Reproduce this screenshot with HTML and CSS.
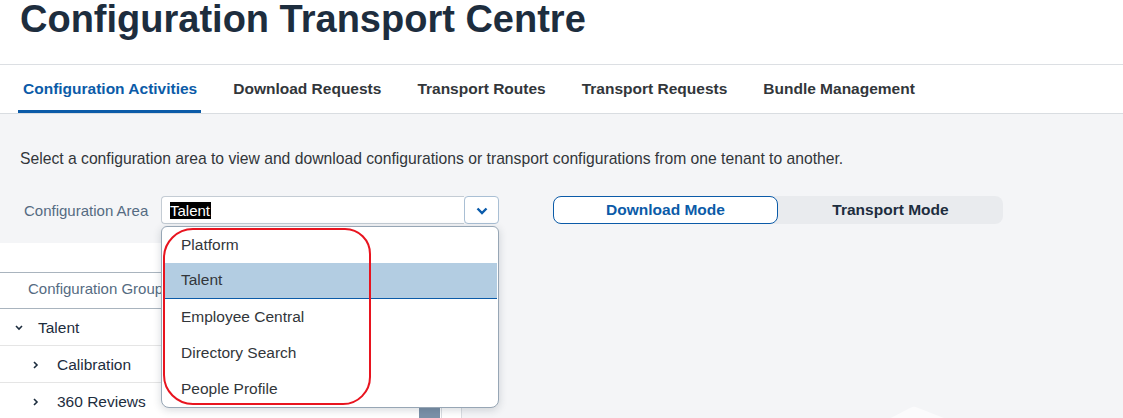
FILE: index.html
```html
<!DOCTYPE html>
<html lang="en">
<head>
    <meta charset="UTF-8">
    <meta name="viewport" content="width=device-width, initial-scale=1.0">
    <title>Configuration Transport Centre</title>
    <link rel="stylesheet" href="styles.css">
</head>
<body>
    <header class="page-header">
        <h1>Configuration Transport Centre</h1>
    </header>
    <nav class="tabs">
        <a class="tab active" href="#">Configuration Activities</a>
        <a class="tab" href="#">Download Requests</a>
        <a class="tab" href="#">Transport Routes</a>
        <a class="tab" href="#">Transport Requests</a>
        <a class="tab" href="#">Bundle Management</a>
    </nav>
    <main class="content">
        <p class="intro">Select a configuration area to view and download configurations or transport configurations from one tenant to another.</p>
        <div class="area-row">
            <label class="area-label">Configuration Area</label>
            <div class="combo">
                <div class="combo-input"><span class="picked">Talent</span></div>
                <button class="combo-btn">
                    <svg width="12" height="8" viewBox="0 0 12 8"><path d="M1.5 1.5 L6 6 L10.5 1.5" fill="none" stroke="#0a5bab" stroke-width="2.4"/></svg>
                </button>
                <!-- open list of areas -->
                <ul class="combo-list">
                    <li>Platform</li>
                    <li class="current">Talent</li>
                    <li>Employee Central</li>
                    <li>Directory Search</li>
                    <li>People Profile</li>
                </ul>
                <div class="annotation"></div>
            </div>
            <div class="mode-switch">
                <button class="mode on">Download Mode</button>
                <button class="mode">Transport Mode</button>
            </div>
        </div>
        <div class="lower">
            <div class="tree-panel">
                <div class="tree-top"></div>
                <div class="tree-table">
                    <div class="tree-rows">
                        <div class="tree-head">Configuration Group</div>
                        <div class="tree-row">
                            <svg class="arrow" width="10" height="8" viewBox="0 0 10 8"><path d="M2 2 L5 5 L8 2" fill="none" stroke="#1d2d3e" stroke-width="1.6"/></svg>
                            <span>Talent</span>
                        </div>
                        <div class="tree-row sub">
                            <svg class="arrow" width="8" height="10" viewBox="0 0 8 10"><path d="M2 2 L5 5 L2 8" fill="none" stroke="#1d2d3e" stroke-width="1.6"/></svg>
                            <span>Calibration</span>
                        </div>
                        <div class="tree-row sub">
                            <svg class="arrow" width="8" height="10" viewBox="0 0 8 10"><path d="M2 2 L5 5 L2 8" fill="none" stroke="#1d2d3e" stroke-width="1.6"/></svg>
                            <span>360 Reviews</span>
                        </div>
                    </div>
                    <div class="scroll-col"><div class="thumb"></div></div>
                    <div class="extra-col"></div>
                </div>
            </div>
            <div class="illustration">
                <svg width="64" height="14" viewBox="0 0 64 14"><path d="M0 14 L24 1.5 Q27 0 30 1.5 L62 14 Z" fill="#fbfbfc"/></svg>
            </div>
        </div>
    </main>
</body>
</html>
```

FILE: styles.css
```css
html, body {
    height: 100%;
}
body {
    margin: 0;
    overflow: hidden;
    font-family: "Liberation Sans", Arial, sans-serif;
    background-color: #f4f5f7;
    color: #1d2d3e;
}
.page-header {
    background-color: #fff;
    height: 64px;
    padding-left: 20px;
    border-bottom: 1px solid #dcdfe3;
}
.page-header h1 {
    margin: 0;
    font-size: 38px;
    line-height: 38px;
    font-weight: bold;
    color: #1d2d3e;
}
.tabs {
    background-color: #fff;
    height: 48px;
    border-bottom: 1px solid #d9dde1;
    display: flex;
    align-items: stretch;
    padding-left: 18px;
    gap: 27px;
}
.tab {
    display: flex;
    align-items: center;
    padding: 3px 4px 0 5px;
    font-size: 15.5px;
    font-weight: bold;
    color: #32363a;
    text-decoration: none;
    border-bottom: 3px solid transparent;
}
.tab.active {
    color: #0b5ba8;
    border-bottom-color: #0b5ba8;
}
.content {
    padding: 35px 20px 0;
}
.intro {
    margin: 0;
    font-size: 15.7px;
    line-height: 20px;
    color: #32363a;
}
.area-row {
    display: flex;
    align-items: center;
    margin-top: 27px;
    height: 28px;
}
.area-label {
    width: 137px;
    padding-left: 4px;
    font-size: 15px;
    color: #556b82;
}
.combo {
    position: relative;
    width: 338px;
    height: 28px;
    display: flex;
}
.combo-input {
    flex: 1;
    background-color: #fff;
    border: 1px solid #c4ccd4;
    border-right: none;
    border-radius: 4px 0 0 4px;
    display: flex;
    align-items: center;
    padding-left: 8px;
}
.picked {
    background-color: #000;
    color: #fff;
    font-size: 15px;
    line-height: 17px;
    padding-right: 1px;
}
.combo-btn {
    width: 35px;
    height: 28px;
    background-color: #fff;
    border: 1px solid #a9bfd4;
    border-radius: 4px;
    display: flex;
    align-items: center;
    justify-content: center;
    padding: 0;
    padding-top: 2px;
}
.combo-list {
    position: absolute;
    top: 30px;
    left: 0;
    width: 338px;
    box-sizing: border-box;
    margin: 0;
    padding: 0;
    list-style: none;
    background-color: #fff;
    border: 1px solid #97a6b5;
    border-radius: 6px 6px 8px 8px;
    box-shadow: 0 2px 8px rgba(30, 45, 62, 0.18);
    z-index: 2;
}
.combo-list li {
    height: 36px;
    box-sizing: border-box;
    display: flex;
    align-items: center;
    padding-left: 19px;
    padding-bottom: 1px;
    font-size: 15.5px;
    color: #32363a;
}
.combo-list li.current {
    background-color: #b3cde2;
    border-bottom: 1px solid #0b5ba8;
    margin: 0 1px;
    padding-left: 18px;
}
.annotation {
    position: absolute;
    left: 2px;
    top: 32px;
    width: 208px;
    height: 177px;
    box-sizing: border-box;
    border: 2.5px solid #e8141f;
    border-radius: 30px 26px 28px 30px;
    z-index: 3;
}
.mode-switch {
    margin-left: 54px;
    width: 450px;
    height: 28px;
    display: flex;
    background-color: #e9ebee;
    border-radius: 8px;
}
.mode {
    flex: 1;
    border: 1px solid transparent;
    border-radius: 8px;
    background: none;
    font-family: inherit;
    font-size: 15.5px;
    font-weight: bold;
    color: #1d2d3e;
    padding: 0;
}
.mode.on {
    background-color: #fff;
    border-color: #0b5ba8;
    color: #0b5ba8;
}
.lower {
    display: flex;
    margin: 19px -20px 0;
    height: 175px;
}
.tree-panel {
    width: 462px;
    background-color: #fff;
}
.tree-top {
    height: 29px;
}
.tree-table {
    display: flex;
    border-top: 1px solid #a9b4be;
}
.tree-rows {
    width: 419px;
}
.tree-head {
    height: 36px;
    box-sizing: border-box;
    padding-bottom: 4px;
    border-bottom: 1px solid #a9b4be;
    display: flex;
    align-items: center;
    padding-left: 28px;
    font-size: 15px;
    color: #556b82;
}
.tree-row {
    height: 37px;
    box-sizing: border-box;
    padding-top: 2px;
    border-bottom: 1px solid #e5e5e5;
    display: flex;
    align-items: center;
    padding-left: 14px;
    font-size: 15.5px;
    color: #1d2d3e;
}
.tree-row .arrow {
    margin-right: 14px;
}
.tree-row.sub {
    padding-left: 32px;
}
.tree-row.sub .arrow {
    margin-right: 17px;
}
.scroll-col {
    width: 22px;
    display: flex;
    flex-direction: column;
    justify-content: flex-end;
}
.thumb {
    width: 21px;
    height: 60px;
    background-color: #7b91a8;
}
.extra-col {
    width: 19px;
    border-left: 1px solid #d9dde1;
    border-right: 1px solid #d9dde1;
}
.illustration {
    flex: 1;
    padding: 163px 0 0 425px;
    line-height: 0;
}
```
